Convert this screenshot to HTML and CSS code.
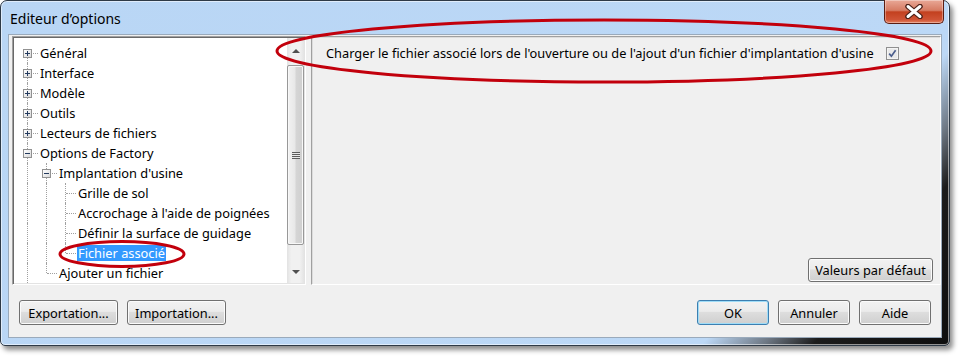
FILE: index.html
```html
<!DOCTYPE html>
<html>
  <head>
    <meta charset="utf-8" />
    <title>Editeur d’options</title>
    <link rel="stylesheet" href="styles.css">
  </head>
  <body>
    <div class="window">
      <div class="titlebar">
        <span class="title">Editeur d’options</span>
        <div class="close">
          <svg width="20" height="15" viewBox="0 0 20 15">
            <path d="M4 2.5 L16 12.5 M16 2.5 L4 12.5" stroke="#4a2018" stroke-width="5.5" stroke-linecap="round" />
            <path d="M4 2.5 L16 12.5 M16 2.5 L4 12.5" stroke="#fff" stroke-width="3" stroke-linecap="round" />
          </svg>
        </div>
      </div>

      <div class="client">
        <div class="panes">
          <div class="tree">
            <div class="tree-items">
              <div class="row"><span class="cell first"><i class="box plus"></i></span><span class="label">Général</span></div>
              <div class="row"><span class="cell tee"><i class="box plus"></i></span><span class="label">Interface</span></div>
              <div class="row"><span class="cell tee"><i class="box plus"></i></span><span class="label">Modèle</span></div>
              <div class="row"><span class="cell tee"><i class="box plus"></i></span><span class="label">Outils</span></div>
              <div class="row"><span class="cell tee"><i class="box plus"></i></span><span class="label">Lecteurs de fichiers</span></div>
              <div class="row"><span class="cell tee"><i class="box minus"></i></span><span class="label">Options de Factory</span></div>
              <div class="row"><span class="cell line"></span><span class="cell tee"><i class="box minus"></i></span><span class="label">Implantation d'usine</span></div>
              <div class="row"><span class="cell line"></span><span class="cell line"></span><span class="cell tee"></span><span class="label">Grille de sol</span></div>
              <div class="row"><span class="cell line"></span><span class="cell line"></span><span class="cell tee"></span><span class="label">Accrochage à l'aide de poignées</span></div>
              <div class="row"><span class="cell line"></span><span class="cell line"></span><span class="cell tee"></span><span class="label">Définir la surface de guidage</span></div>
              <div class="row"><span class="cell line"></span><span class="cell line"></span><span class="cell corner"></span><span class="label selected">Fichier associé</span></div>
              <div class="row"><span class="cell line"></span><span class="cell corner"></span><span class="label">Ajouter un fichier</span></div>
            </div>
            <div class="scrollbar">
              <div class="arrow up"></div>
              <div class="thumb"><span class="grip"></span></div>
              <div class="track"></div>
              <div class="arrow down"></div>
            </div>
          </div>

          <div class="options">
            <div class="option-row">
              <span>Charger le fichier associé lors de l'ouverture ou de l'ajout d'un fichier d'implantation d'usine</span>
              <span class="check">
                <svg width="13" height="13" viewBox="0 0 13 13">
                  <rect x="0.5" y="0.5" width="12" height="12" fill="#f6f6f6" stroke="#8f8f8f" />
                  <rect x="1.5" y="1.5" width="10" height="10" fill="#e9e9e9" stroke="#f4f4f4" />
                  <path d="M3.2 6.6 L5.4 9.2 L9.6 3.2" stroke="#4a5d8c" stroke-width="1.7" fill="none" />
                </svg>
              </span>
            </div>
            <button class="btn defaults">Valeurs par défaut</button>
          </div>
        </div>

        <div class="actions">
          <button class="btn wide">Exportation...</button>
          <button class="btn wide">Importation...</button>
          <span class="spacer"></span>
          <button class="btn small default">OK</button>
          <button class="btn small">Annuler</button>
          <button class="btn small">Aide</button>
        </div>
      </div>
    </div>

    <!-- annotations drawn over the screenshot -->
    <svg class="marks" width="966" height="362">
      <ellipse cx="604" cy="51" rx="327" ry="31" />
      <ellipse cx="122" cy="254" rx="62" ry="12.5" />
    </svg>
  </body>
</html>
```

FILE: styles.css
```css
html,
body {
  margin: 0;
  background: #fff;
}

body {
  position: relative;
  width: 966px;
  height: 362px;
  overflow: hidden;
  font-family: "Noto Sans", "DejaVu Sans", sans-serif;
  font-size: 12.8px;
  color: #000;
}

.window {
  box-sizing: border-box;
  width: 950px;
  height: 346px;
  display: flex;
  flex-direction: column;
  border: 1px solid #2e3a47;
  border-radius: 7px 7px 5px 5px;
  background: linear-gradient(130deg, #b9d6f5 0%, #bcd8f6 80%, #6e7884 85%, #1c1c1c 89%, #0e0e0e 100%);
  box-shadow: inset 0 0 0 1px rgba(255, 255, 255, 0.55), 3px 4px 5px rgba(0, 0, 0, 0.45);
}

.titlebar {
  height: 33px;
  display: flex;
  justify-content: space-between;
  align-items: flex-start;
}

.title {
  margin: 8px 0 0 9px;
  font-size: 14px;
  line-height: 20px;
}

.close {
  box-sizing: border-box;
  width: 60px;
  height: 24px;
  margin: -1px 5px 0 0;
  display: flex;
  align-items: center;
  justify-content: center;
  border: 1px solid #5b1d12;
  border-top: none;
  border-radius: 0 0 5px 5px;
  background: linear-gradient(#e9a897 0%, #d67b63 45%, #c3401f 52%, #cf5335 85%, #e4805f 100%);
  box-shadow: inset 0 0 0 1px rgba(255, 255, 255, 0.35);
}

.client {
  flex: 1;
  margin: 0 7px 7px;
  display: flex;
  flex-direction: column;
  border: 1px solid #9aaabb;
  background: #f0f0f0;
}

.panes {
  height: 249px;
  display: flex;
  gap: 5px;
  padding: 1px 0 0 3px;
}

/* tree */
.tree {
  box-sizing: border-box;
  width: 294px;
  display: flex;
  border: 1px solid;
  border-color: #a0a0a0 #ffffff #ffffff #a0a0a0;
  box-shadow: inset 1px 1px 0 #696969, inset -1px -1px 0 #e3e3e3;
  padding: 1px;
  background: #fff;
}

.tree-items {
  flex: 1;
  padding: 5px 0 0 4px;
  overflow: hidden;
}

.row {
  height: 20px;
  display: flex;
  align-items: center;
  white-space: nowrap;
}

.cell {
  position: relative;
  flex: none;
  width: 19px;
  height: 20px;
}

.cell::before {
  content: "";
  position: absolute;
  left: 9px;
  top: 0;
  bottom: 0;
  border-left: 1px dotted #a0a0a0;
}

.cell::after {
  content: "";
  position: absolute;
  left: 10px;
  right: -1px;
  top: 10px;
  border-top: 1px dotted #a0a0a0;
}

.cell.first::before {
  top: 10px;
}

.cell.corner::before {
  bottom: 10px;
}

.cell.line::after {
  display: none;
}

.box {
  position: absolute;
  z-index: 1;
  left: 5px;
  top: 6px;
  box-sizing: border-box;
  width: 9px;
  height: 9px;
  border: 1px solid #919191;
}

.box.plus {
  background:
    linear-gradient(#233a5e, #233a5e) center / 5px 1px no-repeat,
    linear-gradient(#233a5e, #233a5e) center / 1px 5px no-repeat,
    linear-gradient(135deg, #ffffff, #d9d9d9);
}

.box.minus {
  background:
    linear-gradient(#233a5e, #233a5e) center / 5px 1px no-repeat,
    linear-gradient(135deg, #ffffff, #d9d9d9);
}

.label {
  margin-left: 2px;
  padding: 0 1px;
  line-height: 16px;
}

.label.selected {
  background: #3399ff;
  color: #fff;
}

/* scrollbar */
.scrollbar {
  width: 17px;
  display: flex;
  flex-direction: column;
  background: linear-gradient(to right, #e2e2e2, #f1f1f1 25%, #f1f1f1 75%, #e4e4e4);
}

.arrow {
  display: flex;
  align-items: center;
  justify-content: center;
}

.arrow.up {
  height: 26px;
}

.arrow.down {
  height: 22px;
}

.arrow::before {
  content: "";
  border-left: 4px solid transparent;
  border-right: 4px solid transparent;
}

.arrow.up::before {
  border-bottom: 4px solid #505050;
}

.arrow.down::before {
  border-top: 4px solid #505050;
}

.thumb {
  box-sizing: border-box;
  height: 180px;
  margin-top: 1px;
  display: flex;
  align-items: center;
  justify-content: center;
  border: 1px solid #989898;
  border-radius: 2px;
  background: linear-gradient(to right, #f2f2f2, #e8e8e8 45%, #d5d5d5 55%, #cfcfcf);
  box-shadow: inset 0 0 0 1px #f8f8f8;
}

.grip {
  width: 8px;
  height: 7px;
  background: repeating-linear-gradient(#5c5c5c 0 1px, #e8e8e8 1px 2px);
}

.track {
  flex: 1;
}

/* right pane */
.options {
  flex: 1;
  display: flex;
  flex-direction: column;
  border: 1px solid;
  border-color: #a0a0a0 #ffffff #ffffff #a0a0a0;
  box-shadow: inset 1px 1px 0 #dcdcdc;
}

.option-row {
  height: 16px;
  margin-top: 8px;
  padding-left: 14px;
  display: flex;
  align-items: center;
  white-space: nowrap;
}

.check {
  display: flex;
  margin-left: 12px;
}

.btn {
  box-sizing: border-box;
  height: 25px;
  padding: 0;
  font: inherit;
  color: #000;
  border: 1px solid #707070;
  border-radius: 3px;
  background: linear-gradient(#f2f2f2, #ebebeb 45%, #dddddd 50%, #cfcfcf);
  box-shadow: inset 0 0 0 1px #fbfbfb;
}

.btn.defaults {
  width: 125px;
  height: 24px;
  margin: auto 7px 2px 0;
  align-self: flex-end;
}

.actions {
  display: flex;
  align-items: center;
  gap: 9px;
  padding: 15px 10px 0;
}

.btn.wide {
  width: 99px;
}

.btn.small {
  width: 72px;
}

.btn.default {
  border-color: #3c7fb1;
  box-shadow: inset 0 0 0 1px #9fdcf7;
}

.spacer {
  flex: 1;
}

.marks {
  position: absolute;
  top: 0;
  left: 0;
  pointer-events: none;
}

.marks ellipse {
  fill: none;
  stroke: #c2000c;
  stroke-width: 3;
}
```
